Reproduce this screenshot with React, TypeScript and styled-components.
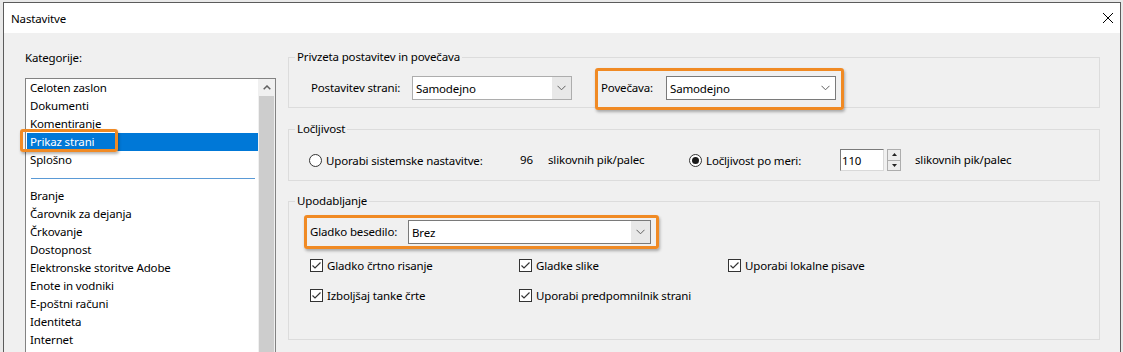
import React from 'react';
import styled, { createGlobalStyle } from 'styled-components';

const GlobalStyle = createGlobalStyle`
  html, body {
    margin: 0;
    padding: 0;
    background: #e9e9e9;
  }
  body {
    font-family: "Noto Sans", "Open Sans", sans-serif;
    font-size: 11.5px;
    letter-spacing: -0.15px;
    color: #000;
  }
  * { box-sizing: border-box; }
`;

const Window = styled.div`
  margin: 2px 0 0 3px;
  width: 1118px;
  height: 420px;
  border: 1px solid #5b5b5b;
  background: #f0f0f0;
  overflow: hidden;
`;

const TitleBar = styled.div`
  height: 30px;
  background: #fff;
  display: flex;
  align-items: center;
  justify-content: space-between;
  padding: 0 7px 0 7px;
`;

const Body = styled.div`
  display: flex;
  gap: 12px;
  padding: 16px 0 0 21px;
`;

const LeftCol = styled.div`
  width: 251px;
  display: flex;
  flex-direction: column;
`;

const CatLabel = styled.div`
  line-height: 16px;
  margin-top: 1px;
`;

const ListBox = styled.div`
  margin-top: 12px;
  height: 340px;
  border: 1px solid #828282;
  background: #fff;
  display: flex;
`;

const Items = styled.div`
  flex: 1;
  padding-left: 1px;
`;

const Item = styled.div<{ $selected?: boolean }>`
  position: relative;
  height: 18px;
  line-height: 18px;
  padding-left: 3px;
  white-space: nowrap;
  background: ${(p) => (p.$selected ? '#0078d7' : 'transparent')};
  color: ${(p) => (p.$selected ? '#fff' : '#000')};
`;

const Separator = styled.div`
  height: 18px;
  display: flex;
  align-items: center;
  padding: 0 3px 0 4px;
  &::before {
    content: '';
    flex: 1;
    height: 1px;
    background: #5a9ad6;
  }
`;

const Ring = styled.span<{ $t: number; $r: number; $b: number; $l: number }>`
  position: absolute;
  top: ${(p) => p.$t}px;
  right: ${(p) => p.$r}px;
  bottom: ${(p) => p.$b}px;
  left: ${(p) => p.$l}px;
  border: 3px solid #f08a24;
  border-radius: 3px;
  box-shadow: 1px 2px 3px rgba(0, 0, 0, 0.3);
  pointer-events: none;
`;

const ItemRing = styled.span`
  position: absolute;
  top: -4px;
  left: -7px;
  width: 98px;
  height: 23px;
  border: 3px solid #f08a24;
  border-radius: 3px;
  box-shadow: 1px 2px 3px rgba(0, 0, 0, 0.3);
`;

const ScrollBar = styled.div`
  width: 17px;
  background: #f0f0f0;
  display: flex;
  flex-direction: column;
`;

const ScrollButton = styled.div`
  height: 17px;
  display: flex;
  align-items: center;
  justify-content: center;
`;

const Thumb = styled.div`
  flex: 1;
  margin: 0 1px;
  background: #cdcdcd;
`;

const RightCol = styled.div`
  width: 812px;
  display: flex;
  flex-direction: column;
`;

const Group = styled.fieldset<{ $mt?: number }>`
  margin: ${(p) => p.$mt ?? 0}px 0 0 0;
  padding: 0;
  border: 1px solid #dcdcdc;
  min-width: 0;
`;

const Legend = styled.legend`
  padding: 0 2px;
  margin-left: 6px;
  line-height: 16px;
  font-size: 11.5px;
`;

const GroupContent = styled.div<{ $pad: string }>`
  padding: ${(p) => p.$pad};
`;

const Row = styled.div`
  display: flex;
  align-items: center;
`;

const Label = styled.div<{ $w?: number; $ml?: number }>`
  width: ${(p) => (p.$w ? `${p.$w}px` : 'auto')};
  margin-left: ${(p) => p.$ml ?? 0}px;
  flex-shrink: 0;
  white-space: nowrap;
  line-height: 16px;
`;

const Annotated = styled.div<{ $ml?: number }>`
  position: relative;
  display: flex;
  align-items: center;
  margin-left: ${(p) => p.$ml ?? 0}px;
`;

const SelectBox = styled.div<{ $w: number; $dark?: boolean }>`
  width: ${(p) => p.$w}px;
  height: 24px;
  border: 1px solid ${(p) => (p.$dark ? '#7a7a7a' : '#adadad')};
  background: #fff;
  display: flex;
  align-items: stretch;
`;

const SelectText = styled.div`
  flex: 1;
  padding-left: 3px;
  display: flex;
  align-items: center;
`;

const SelectArrow = styled.div<{ $gray?: boolean }>`
  width: 19px;
  background: ${(p) => (p.$gray ? '#e8e8e8' : '#fff')};
  display: flex;
  align-items: center;
  justify-content: center;
`;

const RadioWrap = styled.div<{ $w: number }>`
  width: ${(p) => p.$w}px;
  display: flex;
  align-items: center;
  gap: 4px;
  flex-shrink: 0;
  white-space: nowrap;
`;

const NumberInput = styled.div`
  width: 44px;
  height: 22px;
  border: 1px solid #7a7a7a;
  border-right-color: #d9d9d9;
  border-bottom-color: #d9d9d9;
  background: #fff;
  padding-left: 1px;
  display: flex;
  align-items: center;
`;

const Spin = styled.div`
  margin-left: 3px;
  width: 14px;
  height: 22px;
  display: flex;
  flex-direction: column;
`;

const SpinButton = styled.div`
  flex: 1;
  border: 1px solid #adadad;
  background: #ececec;
  display: flex;
  align-items: center;
  justify-content: center;
  & + & {
    border-top: none;
  }
`;

const CheckGrid = styled.div`
  margin-top: 12px;
  display: grid;
  grid-template-columns: 209px 209px auto;
  grid-auto-rows: 18px;
  row-gap: 12px;
`;

const CheckItem = styled.div`
  display: flex;
  align-items: center;
  gap: 4px;
  white-space: nowrap;
`;

const Chevron = () => (
  <svg width="9" height="6" viewBox="0 0 9 6">
    <polyline points="0.5,0.8 4.5,4.8 8.5,0.8" fill="none" stroke="#606060" strokeWidth="1" />
  </svg>
);

const Select = ({ w, value, gray, dark }: { w: number; value: string; gray?: boolean; dark?: boolean }) => (
  <SelectBox $w={w} $dark={dark}>
    <SelectText>{value}</SelectText>
    <SelectArrow $gray={gray}>
      <Chevron />
    </SelectArrow>
  </SelectBox>
);

const Radio = ({ checked }: { checked?: boolean }) => (
  <svg width="13" height="13" viewBox="0 0 13 13">
    <circle cx="6.5" cy="6.5" r="6" fill="#fff" stroke="#333" strokeWidth="1" />
    {checked && <circle cx="6.5" cy="6.5" r="3.5" fill="#1a1a1a" />}
  </svg>
);

const Check = () => (
  <svg width="13" height="13" viewBox="0 0 13 13">
    <rect x="0.5" y="0.5" width="12" height="12" fill="#fff" stroke="#333" strokeWidth="1" />
    <polyline points="2.5,6.5 5,9 10.5,3.5" fill="none" stroke="#333" strokeWidth="1.2" />
  </svg>
);

const CloseIcon = () => (
  <svg width="10" height="10" viewBox="0 0 10 10">
    <line x1="0" y1="0" x2="10" y2="10" stroke="#000" strokeWidth="1" />
    <line x1="10" y1="0" x2="0" y2="10" stroke="#000" strokeWidth="1" />
  </svg>
);

const topItems = ['Celoten zaslon', 'Dokumenti', 'Komentiranje', 'Prikaz strani', 'Splošno'];
const bottomItems = [
  'Branje',
  'Čarovnik za dejanja',
  'Črkovanje',
  'Dostopnost',
  'Elektronske storitve Adobe',
  'Enote in vodniki',
  'E-poštni računi',
  'Identiteta',
  'Internet',
];

export default function App() {
  return (
    <>
      <GlobalStyle />
      <Window>
        <TitleBar>
          <span>Nastavitve</span>
          <CloseIcon />
        </TitleBar>
        <Body>
          <LeftCol>
            <CatLabel>Kategorije:</CatLabel>
            <ListBox>
              <Items>
                {topItems.map((t) => (
                  <Item key={t} $selected={t === 'Prikaz strani'}>
                    {t}
                    {t === 'Prikaz strani' && <ItemRing />}
                  </Item>
                ))}
                <Separator />
                {bottomItems.map((t) => (
                  <Item key={t}>{t}</Item>
                ))}
              </Items>
              <ScrollBar>
                <ScrollButton>
                  <svg width="8" height="5" viewBox="0 0 8 5">
                    <polyline points="0.7,4.3 4,1 7.3,4.3" fill="none" stroke="#606060" strokeWidth="1.5" />
                  </svg>
                </ScrollButton>
                <Thumb />
              </ScrollBar>
            </ListBox>
          </LeftCol>

          <RightCol>
            <Group>
              <Legend>Privzeta postavitev in povečava</Legend>
              <GroupContent $pad="11px 0 7px 22px">
                <Row>
                  <Label $w={101}>Postavitev strani:</Label>
                  <Select w={160} value="Samodejno" gray />
                  <Annotated $ml={29}>
                    <Label $w={65}>Povečava:</Label>
                    <Select w={170} value="Samodejno" dark />
                    <Ring $t={-8} $r={-8} $b={-10} $l={-6} />
                  </Annotated>
                </Row>
              </GroupContent>
            </Group>

            <Group $mt={13}>
              <Legend>Ločljivost</Legend>
              <GroupContent $pad="12px 0 9px 20px">
                <Row>
                  <RadioWrap $w={211}>
                    <Radio />
                    <span>Uporabi sistemske nastavitve:</span>
                  </RadioWrap>
                  <Label $w={28}>96</Label>
                  <Label $w={141}>slikovnih pik/palec</Label>
                  <RadioWrap $w={151}>
                    <Radio checked />
                    <span>Ločljivost po meri:</span>
                  </RadioWrap>
                  <NumberInput>110</NumberInput>
                  <Spin>
                    <SpinButton>
                      <svg width="5" height="3" viewBox="0 0 5 3">
                        <polygon points="0,3 2.5,0 5,3" fill="#222" />
                      </svg>
                    </SpinButton>
                    <SpinButton>
                      <svg width="5" height="3" viewBox="0 0 5 3">
                        <polygon points="0,0 2.5,3 5,0" fill="#222" />
                      </svg>
                    </SpinButton>
                  </Spin>
                  <Label $ml={14}>slikovnih pik/palec</Label>
                </Row>
              </GroupContent>
            </Group>

            <Group $mt={12}>
              <Legend>Upodabljanje</Legend>
              <GroupContent $pad="11px 0 35px 21px">
                <Row>
                  <Annotated>
                    <Label $w={98}>Gladko besedilo:</Label>
                    <Select w={243} value="Brez" gray dark />
                    <Ring $t={-5} $r={-8} $b={-5} $l={-6} />
                  </Annotated>
                </Row>
                <CheckGrid>
                  <CheckItem><Check /><span>Gladko črtno risanje</span></CheckItem>
                  <CheckItem><Check /><span>Gladke slike</span></CheckItem>
                  <CheckItem><Check /><span>Uporabi lokalne pisave</span></CheckItem>
                  <CheckItem><Check /><span>Izboljšaj tanke črte</span></CheckItem>
                  <CheckItem><Check /><span>Uporabi predpomnilnik strani</span></CheckItem>
                </CheckGrid>
              </GroupContent>
            </Group>
          </RightCol>
        </Body>
      </Window>
    </>
  );
}
